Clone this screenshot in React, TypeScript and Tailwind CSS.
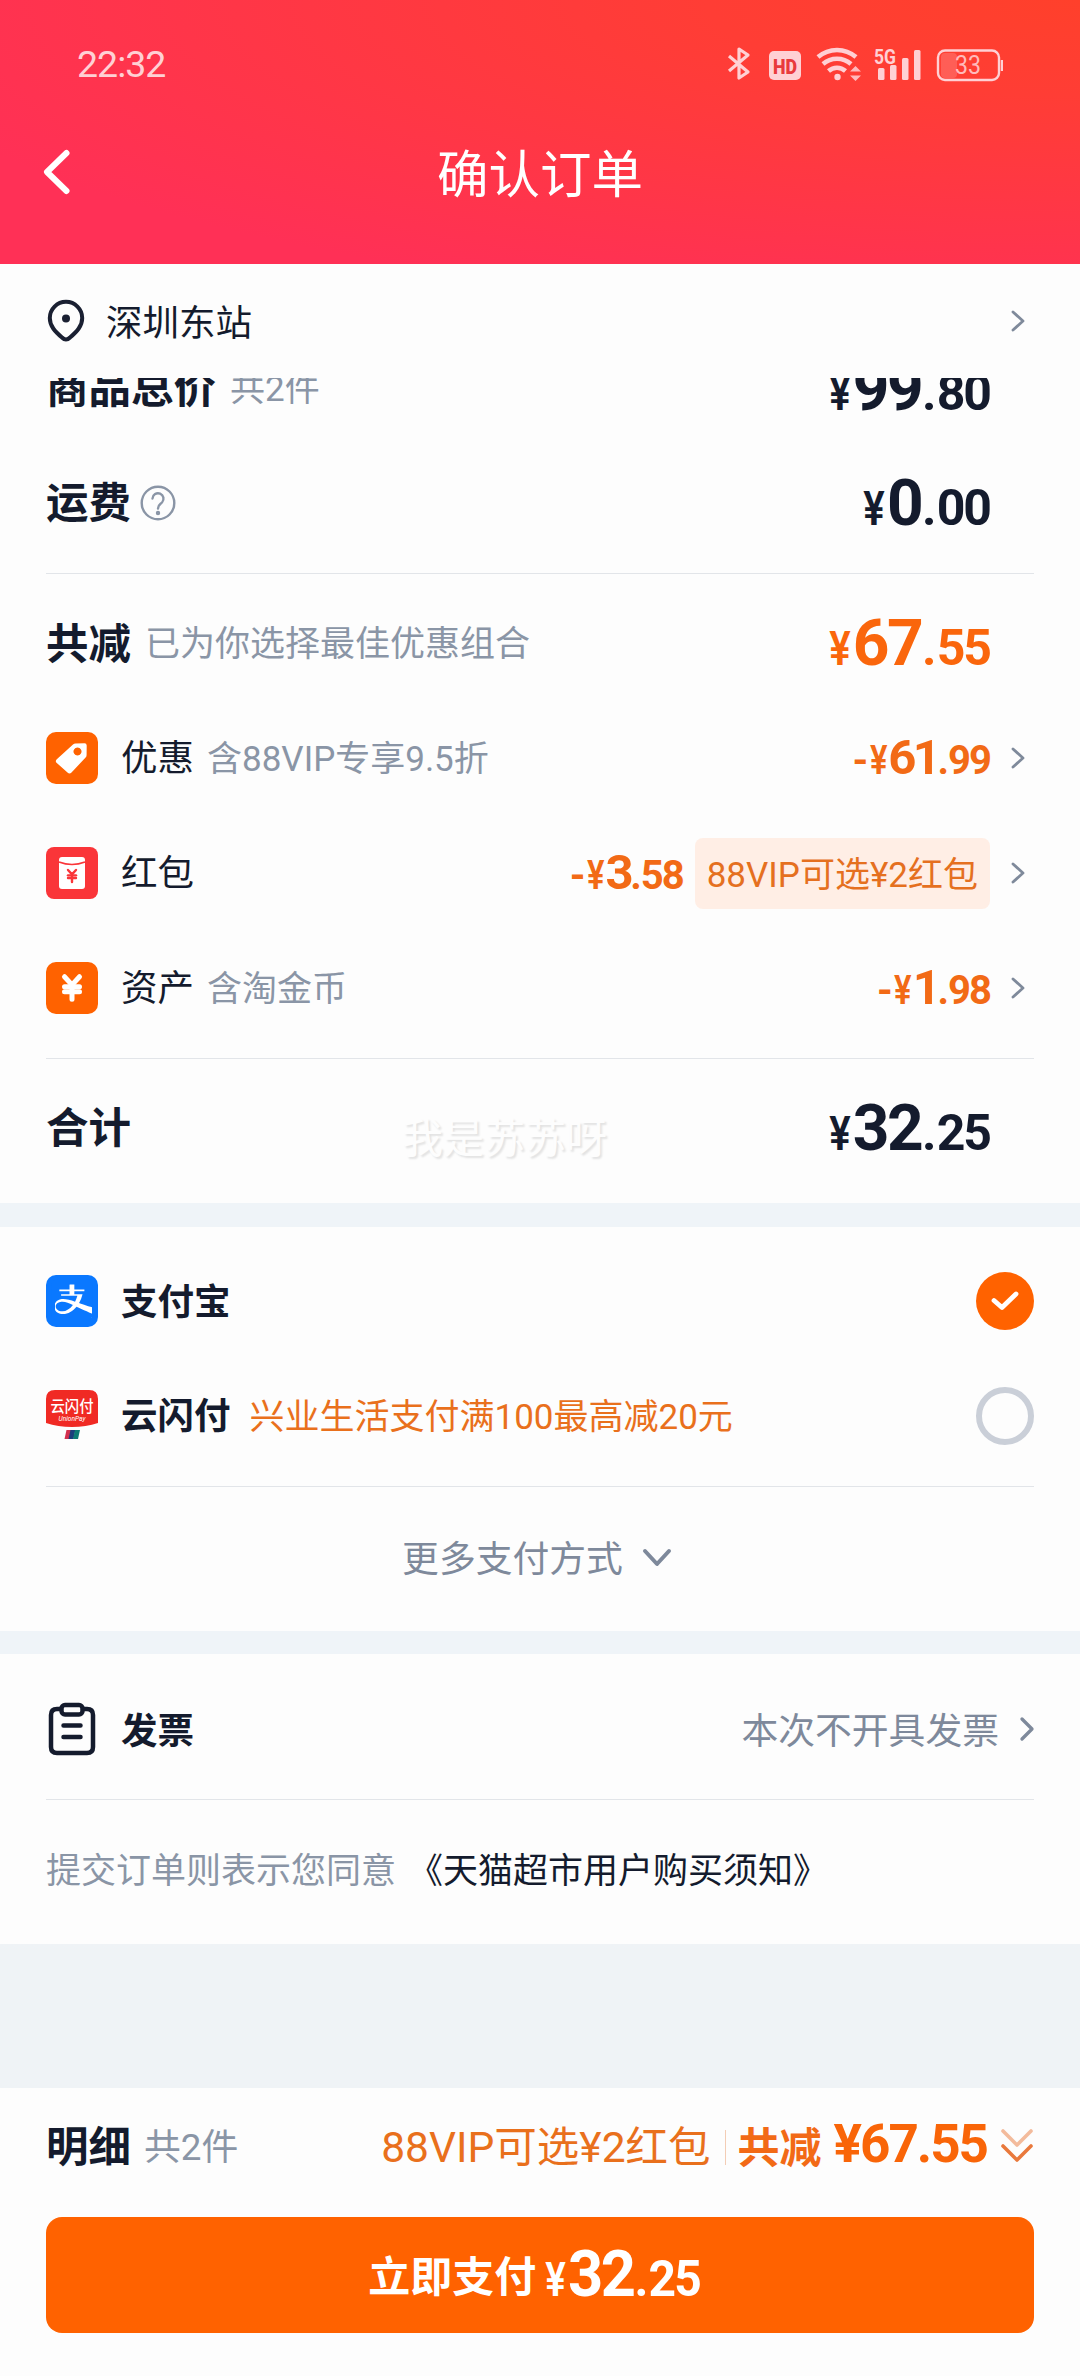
import { useState, type ReactNode } from 'react'
import { clsx } from 'clsx'
import { ChevronRight, JapaneseYen } from 'lucide-react'
import { SiAlipay } from 'react-icons/si'

interface PriceProps {
  value: string
  size?: 'lg' | 'md'
  minus?: boolean
  className?: string
}

/* 金额：整数部分大，¥ 和小数部分小 */
function Price({ value, size = 'lg', minus = false, className }: PriceProps) {
  const [int, dec] = value.split('.')
  const lg = size === 'lg'
  return (
    <span className={clsx('flex items-baseline font-bold', lg ? 'h-16 leading-[64px]' : 'mb-[2px] h-[50px] leading-[50px]', className)}>
      {minus && <span className="inline-block text-[40px] leading-none">-</span>}
      <span
        className={clsx(
          'inline-flex justify-center font-semibold',
          lg ? 'w-[26px] text-[49px] leading-none' : 'w-[20px] text-[40px] leading-none',
        )}
      >
        <span className="inline-block scale-x-[0.82]">¥</span>
      </span>
      <span className={lg ? 'text-[64px] tracking-[-2.5px]' : 'text-[49px] tracking-[-3.5px]'}>{int}</span>
      <span className={clsx('leading-none', lg ? 'ml-px text-[50px]' : 'text-[40px] tracking-[-1px]')}>.</span>
      <span className={clsx('leading-none', lg ? 'text-[50px] tracking-[-2px]' : 'text-[40px] tracking-[-2px]')}>{dec}</span>
    </span>
  )
}

function Arrow({ className }: { className?: string }) {
  return (
    <svg viewBox="0 0 14 22" className={clsx('h-[22px] w-[14px] shrink-0', className)} fill="none" stroke="#7f8a9b" strokeWidth="2.8" strokeLinecap="round" strokeLinejoin="round">
      <path d="M2 2l10 9-10 9" />
    </svg>
  )
}

function Divider() {
  return <div className="my-3 h-px bg-[#e2e5e9]" />
}

function StatusBar() {
  return (
    <div className="flex h-[127px] items-center justify-between pl-[77px] pr-[77px] text-[#ffd0d4]">
      <span className="mt-[3px] text-[37.5px] leading-none tracking-[-1px]">22:32</span>
      <svg viewBox="0 0 276 36" className="h-9 w-[276px]" fill="none" stroke="currentColor">
        {/* 蓝牙 */}
        <path d="M2 10l19 16-9 6V3l9 6L2 25" strokeWidth="3.2" strokeLinejoin="round" />
        <rect x="42" y="5" width="32" height="29" rx="5" fill="currentColor" stroke="none" />
        <text x="58" y="27.5" textAnchor="middle" fontSize="21" fontWeight="900" textLength="24" lengthAdjust="spacingAndGlyphs" fill="#e93a3c" stroke="none">HD</text>
        {/* Wi-Fi */}
        <g strokeWidth="4.5">
          <path d="M91 11c11-9.500 27-9.500 38 0" />
          <path d="M96 18c8-7 20-7 28 0" />
          <path d="M101.500 25c5-4.500 12-4.500 17 0" />
        </g>
        <circle cx="110.500" cy="31" r="3.200" fill="currentColor" stroke="none" />
        <path d="M123 25.500l5.500-5.500 5.500 5.500zM123 29.500l5.500 5.500 5.500-5.500z" fill="currentColor" stroke="none" opacity=".85" />
        {/* 5G 信号 */}
        <text x="147" y="18" fontSize="21" fontWeight="700" textLength="22" lengthAdjust="spacingAndGlyphs" fill="currentColor" stroke="none">5G</text>
        <g fill="currentColor" stroke="none">
          <rect x="151" y="22" width="6.500" height="12" rx="1.500" />
          <rect x="163" y="19" width="6.500" height="15" rx="1.500" />
          <rect x="175" y="12" width="6.500" height="22" rx="1.500" />
          <rect x="187" y="4" width="6.500" height="30" rx="1.500" />
        </g>
        {/* 电池 */}
        <rect x="214" y="7" width="16" height="25" rx="4" fill="currentColor" stroke="none" opacity=".22" />
        <rect x="211" y="4.500" width="61" height="29.500" rx="7" strokeWidth="2.400" />
        <path d="M275 14v11" strokeWidth="2.400" />
        <text x="241" y="28" textAnchor="middle" fontSize="25" textLength="26" lengthAdjust="spacingAndGlyphs" fill="currentColor" stroke="none" opacity=".85">33</text>
      </svg>
    </div>
  )
}

function TagIcon() {
  return (
    <svg viewBox="0 0 52 52" className="mb-px size-[52px]">
      <rect width="52" height="52" rx="10" fill="#ff6200" />
      <path
        fillRule="evenodd"
        fill="#fff"
        d="M27 12.500q1-1 2.500-1.100l9-.2q2.200 0 2.200 2.200l-.1 9.500q0 1.500-1 2.600L25.500 40.500q-2 2-4 0L10.800 31q-2-1.800 0-3.700zM31.500 15.500a4 4 0 1 0 .01 0z"
      />
    </svg>
  )
}

function RedPacketIcon() {
  return (
    <div className="relative mb-px size-[52px]">
      <svg viewBox="0 0 52 52" className="size-[52px]">
        <rect width="52" height="52" rx="8" fill="#fa3539" />
        <rect x="13" y="10" width="26" height="32" rx="3" fill="#fff" />
        <path d="M13 15q13 5 26 0" stroke="#fa3539" strokeWidth="1.600" fill="none" />
      </svg>
      <JapaneseYen className="absolute left-[18px] top-[21px] size-4 text-[#fa3539]" strokeWidth={3.6} />
    </div>
  )
}

/* 图标镂空部分透出白色底 */
function AlipayIcon() {
  return (
    <div className="relative mb-[2px] size-[52px] rounded-[10px] bg-[#0a78ff]">
      <div className="absolute bottom-[9px] left-[9px] right-[6px] top-[8px] bg-white" />
      <SiAlipay className="absolute left-[5px] top-[4px] size-[42px] text-[#0a78ff]" />
    </div>
  )
}

function UnionPayIcon() {
  return (
    <svg viewBox="0 0 52 52" className="mb-[2px] size-[52px]">
      <path d="M9 0h34q9 0 9 9v24q-12 4-26 4T0 33V9q0-9 9-9z" fill="#f02a24" />
      <text x="26" y="21.500" textAnchor="middle" fontSize="16" fontWeight="500" textLength="43" lengthAdjust="spacingAndGlyphs" fill="#fff">云闪付</text>
      <text x="26" y="30.500" textAnchor="middle" fontSize="7.500" fontStyle="italic" textLength="27" lengthAdjust="spacingAndGlyphs" fill="#fff">UnionPay</text>
      <path d="M20.500 40h5l-2 9h-5z" fill="#d3304e" />
      <path d="M24.500 40h5l-2 9h-5z" fill="#1b3f7c" />
      <path d="M29 40h5l-2 9h-5z" fill="#0c7b74" />
    </svg>
  )
}

function Radio({ checked, onClick }: { checked: boolean; onClick: () => void }) {
  return (
    <button
      onClick={onClick}
      className={clsx('mb-[2px] ml-auto flex size-[58px] items-center justify-center rounded-full', checked ? 'bg-[#ff6200]' : 'border-[6px] border-[#cacfd8]')}
    >
      {checked && (
        <svg viewBox="0 0 28 20" className="h-5 w-7" fill="none" stroke="#fff" strokeWidth="4.800" strokeLinecap="round" strokeLinejoin="round">
          <path d="M3 9.500l8 7L25 3" />
        </svg>
      )}
    </button>
  )
}

function Row({ children }: { children: ReactNode }) {
  return <div className="flex h-[115px] items-center">{children}</div>
}

interface DiscountRowProps {
  icon: ReactNode
  label: string
  hint?: string
  value: string
  tag?: string
}

function DiscountRow({ icon, label, hint, value, tag }: DiscountRowProps) {
  return (
    <Row>
      {icon}
      <span className="ml-[23px] mt-[2px] text-[36.5px]">{label}</span>
      {hint && <span className="ml-[13px] mt-[2px] text-[35px] text-[#8a95a6]">{hint}</span>}
      <Price value={value} size="md" minus className="ml-auto text-[#f26a16]" />
      {tag && (
        <span className="ml-[12px] flex h-[71px] items-center rounded-lg bg-[#ffeee5] px-[12px] pt-[3px] text-[35px] text-[#e5701f]">{tag}</span>
      )}
      <Arrow className="mb-px ml-[21px] mr-[9px]" />
    </Row>
  )
}

const DISCOUNTS: DiscountRowProps[] = [
  { icon: <TagIcon />, label: '优惠', hint: '含88VIP专享9.5折', value: '61.99' },
  { icon: <RedPacketIcon />, label: '红包', value: '3.58', tag: '88VIP可选¥2红包' },
  {
    icon: (
      <span className="mb-px flex size-[52px] items-center justify-center rounded-[10px] bg-[#ff6200]">
        <JapaneseYen className="h-8 w-[30px] text-white" strokeWidth={4} />
      </span>
    ),
    label: '资产',
    hint: '含淘金币',
    value: '1.98',
  },
]

export default function App() {
  const [pay, setPay] = useState<'alipay' | 'unionpay'>('alipay')

  return (
    <div className="flex h-[2376px] w-[1080px] flex-col overflow-hidden whitespace-nowrap bg-[#fdfdfd] font-[Roboto,'Noto_Sans_CJK_SC',sans-serif] leading-none text-[#141b2d]">
      <header className="h-[264px] shrink-0 bg-[#ff3056] bg-[radial-gradient(115%_120%_at_100%_0%,#ff402b_0%,#ff3d35_30%,#ff3056_100%)]">
        <StatusBar />
        <div className="flex h-[90px] items-center pl-[41px] text-white">
          <svg viewBox="0 0 32 48" className="h-12 w-8" fill="none" stroke="currentColor" strokeWidth="6" strokeLinecap="round" strokeLinejoin="round">
            <path d="M25.500 5L6 24l19.500 19" />
          </svg>
          <h1 className="flex-1 pr-[73px] pt-[7px] text-center text-[51.5px]">确认订单</h1>
        </div>
      </header>

      {/* 收货地址 */}
      <div className="flex h-[114px] shrink-0 items-center pl-[46px] pr-[55px]">
        <svg viewBox="0 0 40 44" className="h-11 w-10" fill="none" stroke="#1a2032" strokeWidth="4">
          <path d="M20 40.500q-2 0-4-2C9 32.500 3.800 27 3.800 19a16.200 16.200 0 0 1 32.400 0c0 8-5.200 13.500-12.200 19.500q-2 2-4 2z" />
          <circle cx="20" cy="19.500" r="4" fill="#1a2032" stroke="none" />
        </svg>
        <span className="ml-[20px] mt-[7px] text-[36.5px]">深圳东站</span>
        <Arrow className="ml-auto" />
      </div>

      {/* 费用明细，顶部滚动到地址栏下方 */}
      <section className="h-[825px] shrink-0 overflow-hidden px-[46px]">
        <div className="-mt-[47px]">
          <Row>
            <span className="mt-[2px] text-[42.5px] font-bold">商品总价</span>
            <span className="ml-[14px] mt-[2px] text-[35px] text-[#8a95a6]">共2件</span>
            <Price value="99.80" className="ml-auto mr-[44px]" />
          </Row>
        </div>
        <Row>
          <span className="mt-[2px] text-[42.5px] font-bold">运费</span>
          <svg viewBox="0 0 36 36" className="mb-px ml-[9px] size-9" fill="none" stroke="#8a95a6" strokeWidth="2.400" strokeLinecap="round">
            <circle cx="18" cy="18" r="16.300" />
            <path d="M12.500 13.500a5.500 5.500 0 1 1 9.500 4c-2 2-4 2.500-4 6" />
            <circle cx="18" cy="28" r="1" fill="#8a95a6" />
          </svg>
          <Price value="0.00" className="ml-auto mr-[44px]" />
        </Row>
        <Divider />
        <Row>
          <span className="mt-[3px] text-[42.5px] font-bold">共减</span>
          <span className="ml-[14px] mt-[2px] text-[35px] text-[#8a95a6]">已为你选择最佳优惠组合</span>
          <Price value="67.55" className="ml-auto mr-[44px] text-[#fa660c]" />
        </Row>
        {DISCOUNTS.map((d) => (
          <DiscountRow key={d.label} {...d} />
        ))}
        <Divider />
        <Row>
          <span className="mt-[2px] text-[42.5px] font-bold">合计</span>
          <span className="ml-[271px] mt-[22px] text-[41px] text-[#fdfdfd] [text-shadow:2px_2px_2px_#e2e2e2]">我是苏苏呀</span>
          <Price value="32.25" className="ml-auto mr-[44px]" />
        </Row>
      </section>

      <div className="h-6 shrink-0 bg-[#eff4f8]" />

      {/* 支付方式 */}
      <section className="h-[404px] shrink-0 px-[46px] pt-[17px]">
        <Row>
          <AlipayIcon />
          <span className="ml-[23px] mt-[3px] text-[36.5px] font-bold">支付宝</span>
          <Radio checked={pay === 'alipay'} onClick={() => setPay('alipay')} />
        </Row>
        <Row>
          <UnionPayIcon />
          <span className="ml-[23px] mt-[2px] text-[36.5px] font-bold">云闪付</span>
          <span className="ml-[19px] mt-[2px] text-[35px] text-[#e9701c]">兴业生活支付满100最高减20元</span>
          <Radio checked={pay === 'unionpay'} onClick={() => setPay('unionpay')} />
        </Row>
        <Divider />
        <div className="flex h-[118px] items-center justify-center pr-[6px] text-[#7e899b]">
          <span className="mt-[4px] text-[36.8px]">更多支付方式</span>
          <svg viewBox="0 0 30 20" className="ml-[19px] h-5 w-[30px]" fill="none" stroke="currentColor" strokeWidth="4" strokeLinecap="round" strokeLinejoin="round">
            <path d="M3 3l12 13L27 3" />
          </svg>
        </div>
      </section>

      <div className="h-[23px] shrink-0 bg-[#eff4f8]" />

      {/* 发票 */}
      <section className="h-[290px] shrink-0 px-[46px] pt-[18px]">
        <Row>
          <svg viewBox="0 0 52 54" className="mb-[2px] h-[54px] w-[52px]" fill="none" stroke="#141b2d" strokeWidth="4.500" strokeLinecap="round" strokeLinejoin="round">
            <path d="M15 7h-4q-6 0-6 6v32q0 6 6 6h30q6 0 6-6V13q0-6-6-6h-4" />
            <rect x="15.500" y="3" width="21" height="9.500" rx="3.500" />
            <path d="M17.500 23.500h17M17.500 35h17" />
          </svg>
          <span className="ml-[23px] mt-[5px] text-[36.5px] font-bold">发票</span>
          <span className="ml-auto mt-[5px] text-[36.8px] text-[#7e899b]">本次不开具发票</span>
          <ChevronRight className="-mr-[13px] mb-[2px] ml-[8px] size-10 text-[#7e899b]" strokeWidth={2} />
        </Row>
        <Divider />
        <Row>
          <span className="mt-[3px] text-[35px] text-[#8a95a6]">提交订单则表示您同意</span>
          <span className="ml-[12px] mt-[3px] text-[35px]">《天猫超市用户购买须知》</span>
        </Row>
      </section>

      <div className="h-[144px] shrink-0 bg-[#eff3f6]" />

      {/* 底部结算栏 */}
      <footer className="px-[46px]">
        <div className="flex h-[118px] items-center">
          <span className="mt-[3px] text-[42.5px] font-bold">明细</span>
          <span className="ml-[13px] mt-[2px] text-[36.800px] text-[#8a95a6]">共2件</span>
          <span className="ml-auto mt-[2px] text-[42.500px] text-[#e9701c]">88VIP可选¥2红包</span>
          <span className="ml-[14px] h-[35px] w-px bg-[#f3cdb5]" />
          <span className="ml-[12px] mt-[3px] text-[42px] font-bold text-[#f26a16]">共减</span>
          <span className="-mt-[5px] ml-[12px] text-[53px] font-bold tracking-[-2px] text-[#f96508]">¥67.55</span>
          <svg viewBox="0 0 34 36" className="mb-[3px] ml-[13px] h-9 w-[34px]" fill="none" stroke="#e9793c" strokeWidth="3.600" strokeLinecap="round" strokeLinejoin="round">
            <path d="M3 3l14 14L31 3" opacity=".5" />
            <path d="M3 18l14 14 14-14" />
          </svg>
        </div>
        <button className="mt-[11px] flex h-[116px] w-full items-center justify-center rounded-2xl bg-[#ff6200] pr-[11px] text-white">
          <span className="mt-[6px] text-[42px] font-bold">立即支付</span>
          <Price value="32.25" className="-mr-[6px] mb-px ml-[7px] origin-left scale-x-[0.96]" />
        </button>
      </footer>
    </div>
  )
}
